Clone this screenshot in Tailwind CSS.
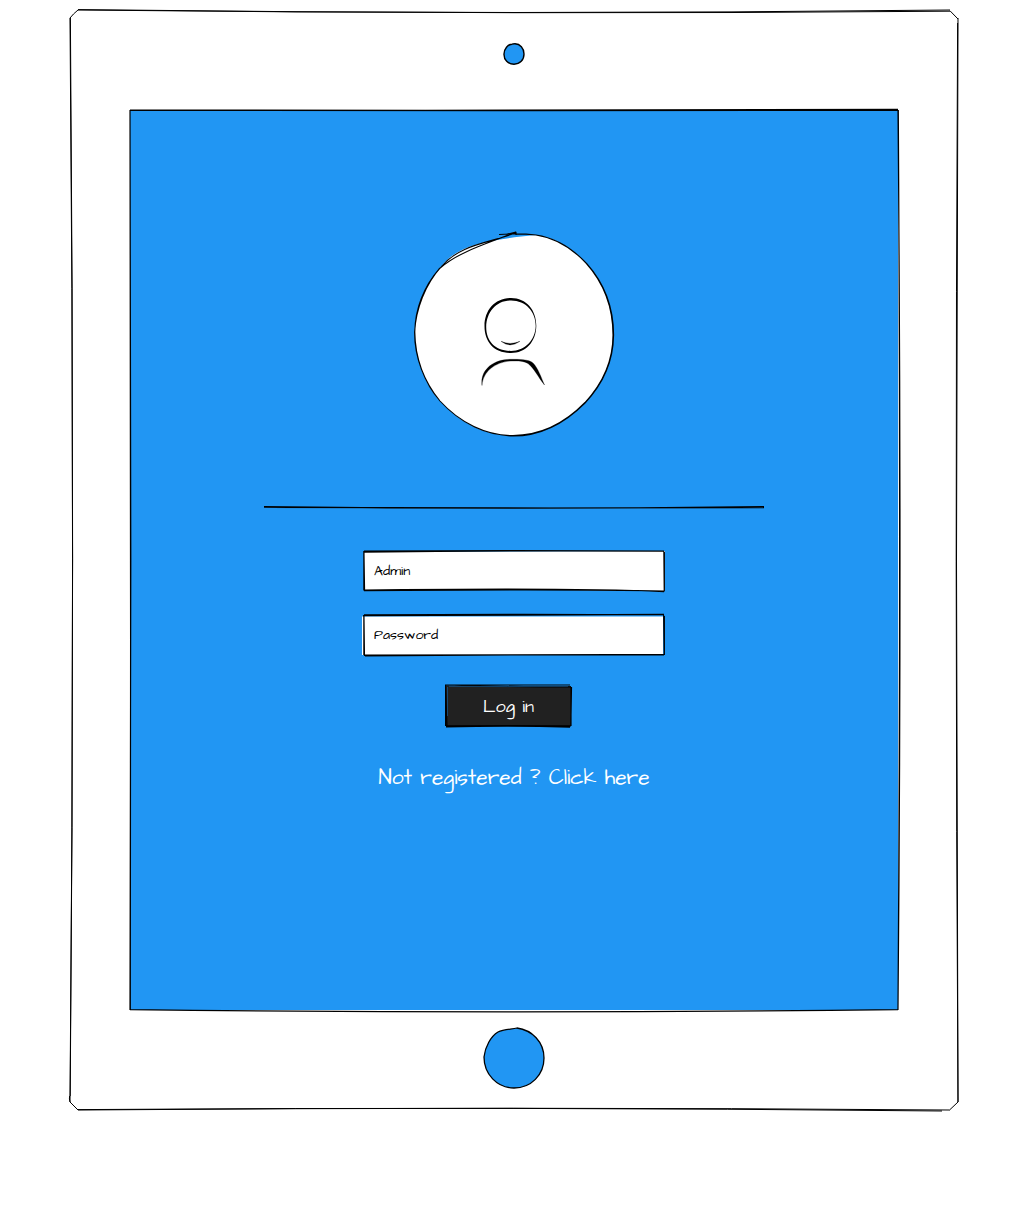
<!DOCTYPE html>
<html lang="en">
<head>
<meta charset="utf-8">
<title>Log in</title>
<script src="https://cdn.jsdelivr.net/npm/@tailwindcss/browser@4"></script>
</head>
<body class="bg-white overflow-hidden">
<main class="w-[1009px] h-[1220px] pt-[10px] pl-[70px] text-black font-['Architects_Daughter',Lato,sans-serif]">
  <section class="relative w-[888px] h-[1100px] flex flex-col items-center">
    <!-- tablet body -->
    <svg class="absolute inset-0 overflow-visible" width="888" height="1100" fill="none" stroke="#000" stroke-width="1">
      <path d="M8 0Q444 5 880 0M8 -.4Q444 5 880 1.2M880 .8L888 9M888 8Q885 550 888 1092M887.6 13Q884.6 550 888 1092M888 1092L879 1100.5M879 1100Q444 1096.5 8 1100M872 1101Q444 1096.5 8 1099.6M8 1100L0 1092Q-1 1089 -.4 1086M0 1092Q5 550 .4 8M.2 1086Q5 550 0 8M0 8Q3 4 8 0"/>
    </svg>

    <!-- camera -->
    <svg class="mt-[33px] w-[22px] h-[22px] shrink-0 overflow-visible" viewBox="0 0 22 22">
      <path d="M12 .8C17 1 21 5 21 11C21 17 17 21.200 11 21.200C5 21 .8 17 1 11C1 6 5 1.200 9 1.200Q11 .5 12 .8Z" fill="#2196f3" stroke="#000" stroke-width="1.4"/>
    </svg>

    <!-- screen -->
    <div class="relative mt-[45px] w-[768px] h-[900px] shrink-0 flex flex-col items-center">
      <svg class="absolute inset-0 overflow-visible" width="768" height="900">
        <path d="M0 0H768V900H0Z" fill="#2196f3"/>
        <path d="M0 .2Q384 1 768 .2M0 0Q384 1 768 -.6M768 0Q772 450 768 900M768.3 0Q771 450 768 900M768 899.6Q384 904 0 899.6M0 900Q1.600 450 0 0M.3 900Q1 450 0 0" fill="none" stroke="#000" stroke-width="1.2"/>
      </svg>

      <!-- avatar -->
      <svg class="relative mt-[123px] w-[200px] h-[204px] shrink-0 overflow-visible" viewBox="0 0 200 204">
        <path d="M122 2C142 5 158 15 172 30C189 49 199 73 199 102C199 127 190 149 171 169.500C150 191 126 202.500 99 202.500C73 203 47 191 26 168C10 150 1 124 .8 99C1 76 10 53 27 34C42 13 70 7 122 2Z" fill="#fff"/>
        <path d="M85 1.500Q105 0 122 2C142 5 158 15 172 30C189 49 199 73 199 102C199 127 190 149 171 169.500C150 191 126 202.500 99 202.500C73 203 47 191 26 168C10 150 1 124 .8 99C1 76 10 53 25 36C45 18 76 10 102 -1L92 1.500M122 2C142 5 159 16 173 31C190 50 199.500 73 199.600 102C199.300 127 190 150 171 170C150 191 125 203 99 203C72 202 46 190 26 168C10 149 .5 124 .6 99C2 76 11 52 27 34C47 10 78 10 102 -.5L102 2" fill="none" stroke="#000" stroke-width="1.100"/>
        <!-- head -->
        <path fill-rule="evenodd" d="M97 65C112.500 65 122.300 77 122.300 93C122 109 111.500 120 97 120C80 120 70.500 109 70.500 93C70.500 77 81 65 97 65ZM97 67.600C82 67.600 72.600 79 72.200 94C72.200 108 81 117.800 97 118C111 117.800 121.400 107 121.700 93C121.700 79 112 67.600 97 67.600Z"/>
        <path d="M87 108.300Q96 112.500 106 108.300Q96 115.500 87 108.300ZM68 152.500C66 137 79 126.300 97 126.300C105 126.300 115 126.300 119 130C124 135 127 144 130.500 152C124 144 120 135 114 130.500C109 127.600 104 128 98 128C82 128.500 69 138 68 152.500Z" stroke="#000" stroke-width=".3"/>
      </svg>

      <!-- divider -->
      <svg class="relative mt-[69px] w-[500px] h-[4px] shrink-0 overflow-visible" viewBox="0 0 500 4" fill="none" stroke="#000" stroke-width="1.2">
        <path d="M0 .6Q250 3.800 500 .6M0 1.300Q250 2.500 500 1.600"/>
      </svg>

      <form class="relative flex flex-col items-center">
        <label class="relative mt-[41px] w-[300px] h-[40px] pl-[10px] pt-[1px] flex items-center text-[14px]">
          <svg class="absolute inset-0 overflow-visible" width="300" height="40">
            <path d="M0 1L301 0V40L150 38.500L0 39Z" fill="#fff"/>
            <path d="M0 0Q150 -.8 300 0M0 1.100Q150 -.8 300 .2M299.800 0L300.200 40.600M300.400 1V40M300 40.600Q210 36.500 0 39M300 40Q210 38 0 39.600M-.2 39.500V0M.6 39.500L0 1" fill="none" stroke="#000" stroke-width="1.100"/>
          </svg>
          <span class="relative">Admin</span>
        </label>
        <label class="relative mt-[24px] w-[300px] h-[40px] pl-[10px] pt-[1px] flex items-center text-[14px]">
          <svg class="absolute inset-0 overflow-visible" width="300" height="40">
            <path d="M-2 1.500H299V40H-2Z" fill="#fff"/>
            <path d="M0 -.2Q150 -1 300 -.3M-1 .8Q150 0 300 -.6M299.600 0L300.200 40M300.400 1V40M300 39.600Q150 39.500 0 40M300 40Q150 39.500 1 41M-.2 40V0M.5 41L0 1" fill="none" stroke="#000" stroke-width="1.100"/>
          </svg>
          <span class="relative">Password</span>
        </label>
        <button type="button" class="relative mt-[31px] mr-[11px] w-[125px] h-[40px] flex items-center justify-center text-white text-[18px]">
          <svg class="absolute inset-0 overflow-visible" width="125" height="40">
            <path d="M0 0H125V40H0Z" fill="#212121"/>
            <path d="M-1 -1L124 -1M0 -1Q65 1 125 1M125 1V40M125.500 1L124.800 40M124 41.200Q65 39 0 41M125 39.800Q65 39.500 0 39.800M-.4 40V-1M1 40L-.4 0" fill="none" stroke="#000" stroke-width="1.200"/>
            <path d="M1.500 1V30M3 .3Q60 .8 122 .3" fill="none" stroke="#1565a8" stroke-width=".6"/>
          </svg>
          <span class="relative">Log in</span>
        </button>
      </form>
      <a class="relative mt-[36px] leading-[32px] text-[21px] text-white whitespace-nowrap">Not registered ? Click here</a>
    </div>

    <!-- home button -->
    <svg class="mt-[18px] w-[60px] h-[60px] shrink-0 overflow-visible" viewBox="0 0 60 60">
      <path d="M33 0C48 2 60 14 60 30C60 47 47 60 30 60C13 60 0 46 0 29C1 19 7 8 14 4C20 1 28 1.500 33 0Z" fill="#2196f3" stroke="#000" stroke-width="1.300"/>
    </svg>
  </section>
</main>
</body>
</html>
